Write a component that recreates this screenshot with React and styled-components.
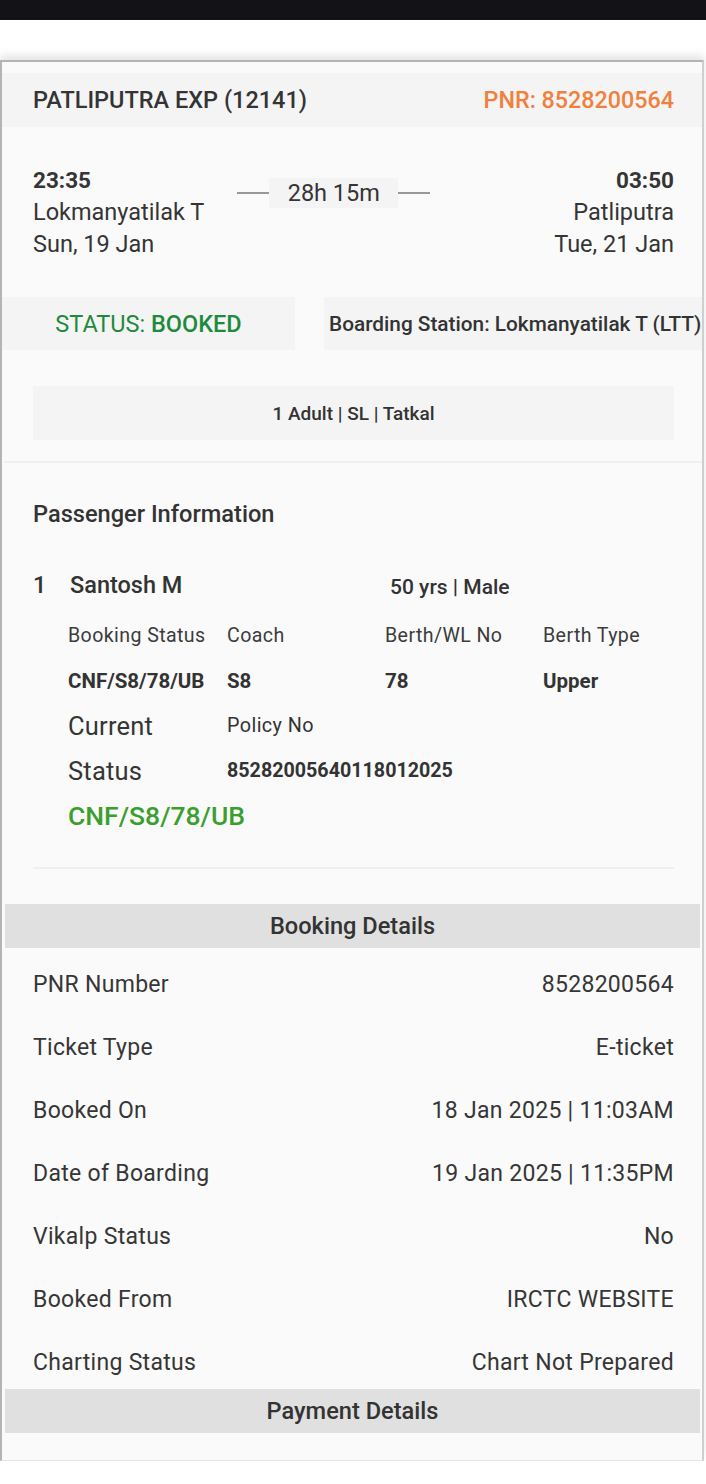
import React from 'react';
import styled, { createGlobalStyle } from 'styled-components';

const GlobalStyle = createGlobalStyle`
  html, body {
    margin: 0;
    padding: 0;
    background: #ffffff;
  }
  body {
    font-family: Roboto, "Noto Sans", "Liberation Sans", sans-serif;
    color: #333333;
  }
`;

const Page = styled.div`
  width: 706px;
  height: 1484px;
  overflow: hidden;
  background: #ffffff;
`;

const StatusBar = styled.div`
  height: 20px;
  background: #121217;
`;

const Gap = styled.div`
  height: ${(p) => p.h}px;
`;

const Card = styled.div`
  margin: 0 2px 0 0;
  background: #fafafa;
  border: 2px solid #b4b4b4;
  border-bottom: 1px solid #e6e6e6;
  border-right: 2px solid #cfcfcf;
  box-shadow: 0 -5px 8px rgba(0, 0, 0, 0.1);
  padding-top: 11px;
  padding-bottom: 27px;
  overflow: hidden;
`;

const Header = styled.div`
  height: 54px;
  background: #f4f4f4;
  display: flex;
  align-items: center;
  justify-content: space-between;
  padding: 0 28px 0 31px;
  font-size: 23.5px;
  font-weight: 500;
`;

const Train = styled.span`
  color: #343434;
`;

const Pnr = styled.span`
  color: #f0803c;
  font-size: 23.3px;
`;

const Journey = styled.div`
  display: flex;
  align-items: flex-start;
  padding: 37px 28px 0 31px;
`;

const End = styled.div`
  display: flex;
  flex-direction: column;
  align-items: ${(p) => (p.right ? 'flex-end' : 'flex-start')};
  margin-left: ${(p) => (p.right ? 'auto' : '0')};
  font-size: 23.5px;
  line-height: 32px;
  color: #353535;
`;

const Time = styled.span`
  font-weight: 700;
  font-size: 22.5px;
`;

const Duration = styled.div`
  display: flex;
  align-items: center;
  height: 30px;
  margin-top: 14px;
  margin-left: 33px;
`;

const Dash = styled.span`
  width: 32px;
  height: 2px;
  background: #999999;
`;

const DurationText = styled.span`
  background: #f4f4f4;
  width: 129px;
  text-align: center;
  font-size: 23.5px;
  line-height: 30px;
  color: #353535;
`;

const StatusRow = styled.div`
  display: flex;
  gap: 29px;
  margin-top: 37px;
  height: 53px;
`;

const StatusBox = styled.div`
  width: 293px;
  flex-shrink: 0;
  background: #f4f4f4;
  display: flex;
  align-items: center;
  justify-content: center;
  font-size: 23.5px;
  color: #1e8a3c;
`;

const Strong = styled.span`
  font-weight: 500;
`;

const BoardingBox = styled.div`
  flex: 1;
  background: #f4f4f4;
  display: flex;
  align-items: center;
  padding-left: 5px;
  white-space: nowrap;
  font-size: 20.8px;
  font-weight: 500;
  color: #333333;
`;

const ClassBox = styled.div`
  margin: 36px 28px 0 31px;
  height: 54px;
  background: #f4f4f4;
  display: flex;
  align-items: center;
  justify-content: center;
  font-size: 19px;
  font-weight: 500;
  color: #333333;
`;

const Rule = styled.div`
  height: 2px;
  background: #efefef;
  margin: ${(p) => p.m};
`;

const SectionTitle = styled.div`
  padding: 36px 31px 0;
  font-size: 23.6px;
  line-height: 30px;
  font-weight: 500;
  color: #333333;
`;

const Passenger = styled.div`
  display: flex;
  align-items: center;
  margin: 41px 0 0 31px;
  height: 30px;
  color: #333333;
`;

const PaxNo = styled.span`
  width: 37px;
  font-size: 23.5px;
  font-weight: 500;
`;

const PaxName = styled.span`
  width: 320px;
  font-size: 23.5px;
  font-weight: 500;
`;

const PaxMeta = styled.span`
  font-size: 21px;
  font-weight: 500;
  margin-top: 4px;
`;

const PaxGrid = styled.div`
  display: grid;
  grid-template-columns: ${(p) => p.cols};
  grid-auto-rows: 45px;
  align-items: center;
  padding-left: 66px;
  margin-top: ${(p) => p.top || 0}px;
`;

const Label = styled.div`
  font-size: 19.6px;
  letter-spacing: 0.4px;
  color: #3c3c3c;
`;

const Value = styled.div`
  font-size: 20.5px;
  font-weight: 700;
  color: #333333;
`;

const Big = styled.div`
  font-size: 25.5px;
  color: #353535;
  letter-spacing: 0.2px;
`;

const Small = styled.div`
  font-size: ${(p) => (p.bold ? 19.7 : 19.8)}px;
  letter-spacing: ${(p) => (p.bold ? 0 : 0.4)}px;
  color: #333333;
  font-weight: ${(p) => (p.bold ? 700 : 400)};
`;

const Current = styled.div`
  font-size: 26.5px;
  font-weight: 500;
  color: #3a9f2c;
`;

const Band = styled.div`
  margin: 0 2px 0 3px;
  height: 44px;
  background: #e0e0e0;
  display: flex;
  align-items: center;
  justify-content: center;
  font-size: 23.6px;
  font-weight: 500;
  color: #333333;
`;

const DetailRow = styled.div`
  display: flex;
  justify-content: space-between;
  padding: 22px 28px 11px 31px;
  font-size: 23px;
  line-height: 30px;
  letter-spacing: 0.3px;
  color: #363636;
`;

const details = [
  ['PNR Number', '8528200564'],
  ['Ticket Type', 'E-ticket'],
  ['Booked On', '18 Jan 2025 | 11:03AM'],
  ['Date of Boarding', '19 Jan 2025 | 11:35PM'],
  ['Vikalp Status', 'No'],
  ['Booked From', 'IRCTC WEBSITE'],
  ['Charting Status', 'Chart Not Prepared'],
];

export default function App() {
  return (
    <Page>
      <GlobalStyle />
      <StatusBar />
      <Gap h={40} />
      <Card>
        <Header>
          <Train>PATLIPUTRA EXP (12141)</Train>
          <Pnr>PNR: 8528200564</Pnr>
        </Header>

        <Journey>
          <End>
            <Time>23:35</Time>
            <span>Lokmanyatilak T</span>
            <span>Sun, 19 Jan</span>
          </End>
          <Duration>
            <Dash />
            <DurationText>28h 15m</DurationText>
            <Dash />
          </Duration>
          <End right>
            <Time>03:50</Time>
            <span>Patliputra</span>
            <span>Tue, 21 Jan</span>
          </End>
        </Journey>

        <StatusRow>
          <StatusBox>
            STATUS:&nbsp;<Strong>BOOKED</Strong>
          </StatusBox>
          <BoardingBox>Boarding Station: Lokmanyatilak T (LTT)</BoardingBox>
        </StatusRow>

        <ClassBox>1 Adult | SL | Tatkal</ClassBox>
        <Rule m="21px 0 0 2px" />

        <SectionTitle>Passenger Information</SectionTitle>

        <Passenger>
          <PaxNo>1</PaxNo>
          <PaxName>Santosh M</PaxName>
          <PaxMeta>50 yrs | Male</PaxMeta>
        </Passenger>

        <PaxGrid cols="159px 158px 158px 1fr" top={13}>
          <Label>Booking Status</Label>
          <Label>Coach</Label>
          <Label>Berth/WL No</Label>
          <Label>Berth Type</Label>
          <Value>CNF/S8/78/UB</Value>
          <Value>S8</Value>
          <Value>78</Value>
          <Value>Upper</Value>
        </PaxGrid>

        <PaxGrid cols="159px 1fr">
          <Big>Current</Big>
          <Small>Policy No</Small>
          <Big>Status</Big>
          <Small bold>85282005640118012025</Small>
          <Current>CNF/S8/78/UB</Current>
        </PaxGrid>

        <Rule m="29px 28px 0 31px" />
        <Gap h={35} />

        <Band>Booking Details</Band>
        {details.map(([k, v]) => (
          <DetailRow key={k}>
            <span>{k}</span>
            <span>{v}</span>
          </DetailRow>
        ))}
        <Band>Payment Details</Band>
      </Card>
    </Page>
  );
}
